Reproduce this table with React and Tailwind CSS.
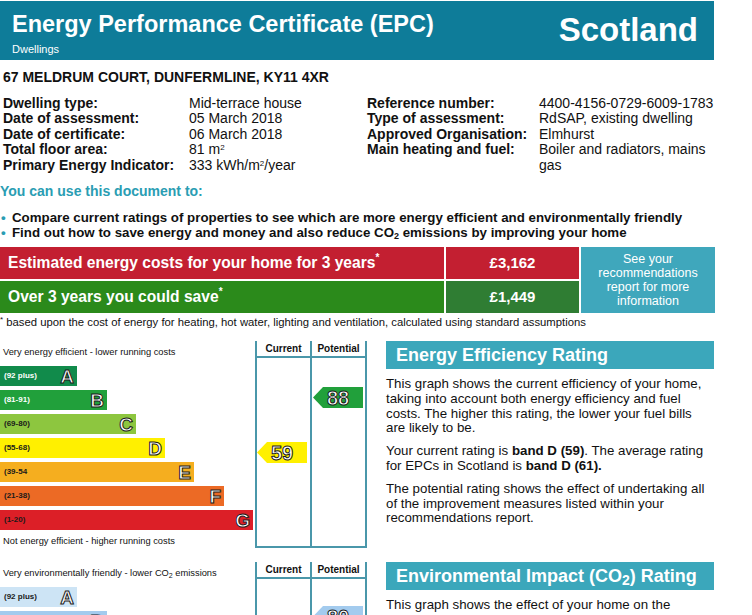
import React from "react";

const energyBands = [
  { letter: "A", range: "(92 plus)", bar: "w-[77px] bg-[#118b4b]", label: "text-white" },
  { letter: "B", range: "(81-91)", bar: "w-[107px] bg-[#21a03b]", label: "text-white" },
  { letter: "C", range: "(69-80)", bar: "w-[136px] bg-[#8dc63f]", label: "text-[#1a1a1a]" },
  { letter: "D", range: "(55-68)", bar: "w-[165px] bg-[#fff000]", label: "text-[#1a1a1a]" },
  { letter: "E", range: "(39-54", bar: "w-[194px] bg-[#f5ae1f]", label: "text-[#1a1a1a]" },
  { letter: "F", range: "(21-38)", bar: "w-[224px] bg-[#ec6a25]", label: "text-[#1a1a1a]" },
  { letter: "G", range: "(1-20)", bar: "w-[253px] bg-[#dc1f27]", label: "text-[#1a1a1a]" },
];

const co2Bands = [
  { letter: "A", range: "(92 plus)", bar: "w-[77px] bg-[#cde4f5]", label: "text-[#1a1a1a]" },
  { letter: "B", range: "(81-91)", bar: "w-[107px] bg-[#a3cbee]", label: "text-[#1a1a1a]" },
  { letter: "C", range: "(69-80)", bar: "w-[136px] bg-[#6fb4e6]", label: "text-[#1a1a1a]" },
  { letter: "D", range: "(55-68)", bar: "w-[165px] bg-[#2a90d6]", label: "text-white" },
  { letter: "E", range: "(39-54", bar: "w-[194px] bg-[#1f6fb7]", label: "text-white" },
  { letter: "F", range: "(21-38)", bar: "w-[224px] bg-[#9b9b9b]", label: "text-white" },
  { letter: "G", range: "(1-20)", bar: "w-[253px] bg-[#7a7a7a]", label: "text-white" },
];

const outline = "font-bold text-white [-webkit-text-stroke:1px_#1a1a1a]";

function Arrow({ value, className }) {
  return (
    <div
      className={
        "flex h-[21px] w-[50px] items-center justify-center [clip-path:polygon(10px_0,100%_0,100%_100%,10px_100%,0_50%)] " +
        className
      }
    >
      <span className={"text-[20px] leading-none " + outline}>{value}</span>
    </div>
  );
}

function RatingChart({ top, bottom, bands, current, potential }) {
  return (
    <div className="flex h-[207px] w-[367px] shrink-0">
      <div className="flex w-[255px] flex-col">
        <div className="mt-[5px] pl-[3px] text-[9.3px] leading-[12px]">{top}</div>
        <div className="mt-[8px] flex flex-col gap-[4px]">
          {bands.map((b) => (
            <div
              key={b.letter}
              className={"flex h-[20px] items-center justify-between pl-[4px] pr-[3px] " + b.bar}
            >
              <span className={"text-[8px] font-bold " + b.label}>{b.range}</span>
              <span className={"text-[19px] leading-none " + outline}>{b.letter}</span>
            </div>
          ))}
        </div>
        <div className="mt-[5px] pl-[3px] text-[9.3px] leading-[12px]">{bottom}</div>
      </div>
      <div className="flex w-[55px] flex-col border-b-2 border-l-2 border-[#4a97aa]">
        <div className="h-[17px] border-b-2 border-[#4a97aa] text-center text-[10px] font-bold leading-[15px]">
          Current
        </div>
        {current}
      </div>
      <div className="flex w-[57px] flex-col border-x-2 border-b-2 border-[#4a97aa]">
        <div className="h-[17px] border-b-2 border-[#4a97aa] text-center text-[10px] font-bold leading-[15px]">
          Potential
        </div>
        {potential}
      </div>
    </div>
  );
}

function SectionHeader({ children }) {
  return (
    <div className="h-[28px] bg-[#3ba7bb] pl-[10px] text-[18px] font-bold leading-[28px] text-white">
      {children}
    </div>
  );
}

export default function App() {
  const rowsLeft = [
    ["Dwelling type:", "Mid-terrace house"],
    ["Date of assessment:", "05 March 2018"],
    ["Date of certificate:", "06 March 2018"],
    ["Total floor area:", <>81 m<sup className="text-[8px]">2</sup></>],
    ["Primary Energy Indicator:", <>333 kWh/m<sup className="text-[8px]">2</sup>/year</>],
  ];
  const rowsRight = [
    ["Reference number:", "4400-4156-0729-6009-1783"],
    ["Type of assessment:", "RdSAP, existing dwelling"],
    ["Approved Organisation:", "Elmhurst"],
    ["Main heating and fuel:", "Boiler and radiators, mains gas"],
  ];

  return (
    <div className="h-[615px] w-[752px] overflow-hidden bg-white font-['Liberation_Sans',Arial,sans-serif] text-[#111]">
      {/* header */}
      <div className="mt-px flex h-[59px] w-[714px] justify-between bg-[#0e7c99] text-white">
        <div className="pl-[12px] pt-[9px]">
          <div className="text-[23.5px] font-bold leading-[28px]">Energy Performance Certificate (EPC)</div>
          <div className="mt-[5px] text-[11px] leading-[13px]">Dwellings</div>
        </div>
        <div className="flex items-center pr-[16px] pb-[1px] text-[33px] font-bold">Scotland</div>
      </div>

      <div className="mt-[9px] pl-[3px] text-[14px] font-bold leading-[16px]">
        67 MELDRUM COURT, DUNFERMLINE, KY11 4XR
      </div>

      {/* details */}
      <div className="mt-[11px] flex pl-[3px] text-[14px] leading-[15.4px]">
        <div className="grid grid-cols-[186px_178px]">
          {rowsLeft.map(([k, v]) => (
            <React.Fragment key={k}>
              <div className="font-bold">{k}</div>
              <div>{v}</div>
            </React.Fragment>
          ))}
        </div>
        <div className="grid grid-cols-[172px_178px] content-start">
          {rowsRight.map(([k, v]) => (
            <React.Fragment key={k}>
              <div className="font-bold">{k}</div>
              <div>{v}</div>
            </React.Fragment>
          ))}
        </div>
      </div>

      <div className="mt-[10px] text-[14px] font-bold leading-[16px] text-[#2a9db3]">
        You can use this document to:
      </div>
      <ul className="mt-[11px] text-[13.3px] font-bold leading-[15px]">
        <li className="flex">
          <span className="w-[12px] pl-[1px] text-[#2a9db3]">•</span>
          Compare current ratings of properties to see which are more energy efficient and environmentally friendly
        </li>
        <li className="flex">
          <span className="w-[12px] pl-[1px] text-[#2a9db3]">•</span>
          <span>
            Find out how to save energy and money and also reduce CO<sub className="text-[9px]">2</sub> emissions
            by improving your home
          </span>
        </li>
      </ul>

      {/* costs */}
      <div className="mt-[7px] flex">
        <div className="flex w-[579px] flex-col gap-[2px] text-[15.6px] font-bold text-white">
          <div className="flex h-[32px]">
            <div className="flex w-[444px] items-center bg-[#c31f31] pl-[8px]">
              Estimated energy costs for your home for 3 years<sup className="text-[10px]">*</sup>
            </div>
            <div className="ml-[2px] flex flex-1 items-center justify-center bg-[#c31f31] text-[15px]">£3,162</div>
          </div>
          <div className="flex h-[32px]">
            <div className="flex w-[444px] items-center bg-[#2b8a1b] pl-[8px]">
              Over 3 years you could save<sup className="text-[10px]">*</sup>
            </div>
            <div className="ml-[2px] flex flex-1 items-center justify-center bg-[#2f7d33] text-[15px]">£1,449</div>
          </div>
        </div>
        <div className="ml-[2px] flex h-[66px] w-[134px] items-center justify-center bg-[#3fa7bc] text-center text-[12.5px] leading-[14px] text-white">
          See your
          <br />
          recommendations
          <br />
          report for more
          <br />
          information
        </div>
      </div>

      <div className="mt-[3px] text-[11.3px] leading-[13px]">
        <sup className="text-[8px]">*</sup> based upon the cost of energy for heating, hot water, lighting and
        ventilation, calculated using standard assumptions
      </div>

      {/* energy efficiency */}
      <div className="mt-[12px] flex">
        <RatingChart
          top="Very energy efficient - lower running costs"
          bottom="Not energy efficient - higher running costs"
          bands={energyBands}
          current={<Arrow value="59" className="mt-[84px] bg-[#fff000]" />}
          potential={<Arrow value="88" className="ml-px mt-[29px] bg-[#21a03b]" />}
        />
        <div className="ml-[19px] w-[328px]">
          <SectionHeader>Energy Efficiency Rating</SectionHeader>
          <div className="mt-[8px] text-[13.3px] leading-[14.8px]">
            <p>
              This graph shows the current efficiency of your home, taking into account both energy efficiency
              and fuel costs. The higher this rating, the lower your fuel bills are likely to be.
            </p>
            <p className="mt-[8px]">
              Your current rating is <b>band D (59)</b>. The average rating for EPCs in Scotland is{" "}
              <b>band D (61).</b>
            </p>
            <p className="mt-[8px]">
              The potential rating shows the effect of undertaking all of the improvement measures listed within
              your recommendations report.
            </p>
          </div>
        </div>
      </div>

      {/* environmental impact */}
      <div className="mt-[14px] flex">
        <RatingChart
          top={
            <>
              Very environmentally friendly - lower CO<sub className="text-[7px]">2</sub> emissions
            </>
          }
          bottom={
            <>
              Not environmentally friendly - higher CO<sub className="text-[7px]">2</sub> emissions
            </>
          }
          bands={co2Bands}
          current={<Arrow value="55" className="mt-[96px] bg-[#2a90d6]" />}
          potential={<Arrow value="80" className="ml-px mt-[27px] bg-[#a3cbee]" />}
        />
        <div className="ml-[19px] w-[328px]">
          <SectionHeader>
            Environmental Impact (CO<span className="relative top-[3px] text-[14px]">2</span>) Rating
          </SectionHeader>
          <div className="mt-[8px] text-[13.3px] leading-[14.8px]">
            <p>
              This graph shows the effect of your home on the environment in terms of carbon dioxide (CO
              <sub className="text-[9px]">2</sub>) emissions. The higher the rating, the less impact it has on
              the environment.
            </p>
          </div>
        </div>
      </div>
    </div>
  );
}
